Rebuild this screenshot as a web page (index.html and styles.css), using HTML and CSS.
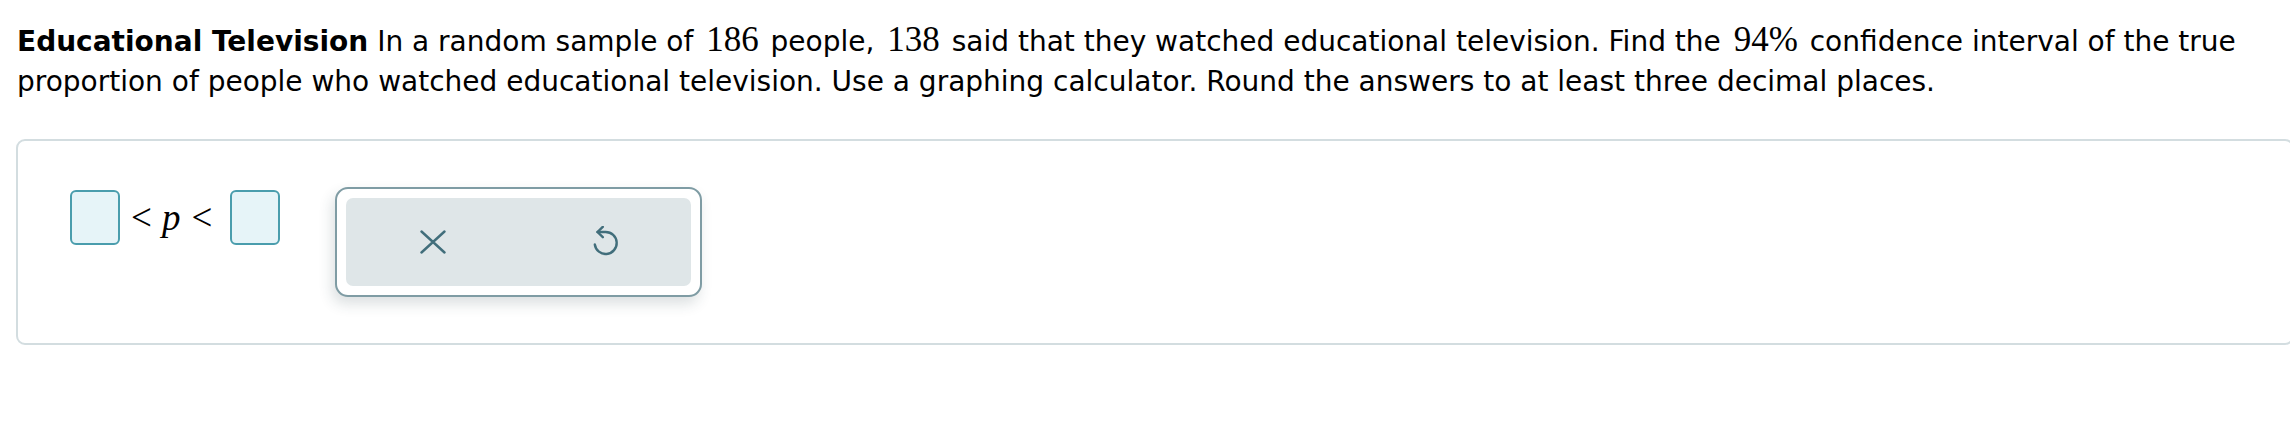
FILE: index.html
```html
<!DOCTYPE html>
<html lang="en">
<head>
<meta charset="utf-8">
<title>Educational Television</title>
<link rel="stylesheet" href="styles.css">
</head>
<body>
<main class="page">
  <p class="question"><strong class="title">Educational Television</strong> In a random sample of <span class="num">186</span> people, <span class="num">138</span> said that they watched educational television. Find the <span class="num">94%</span> confidence interval of the true proportion of people who watched educational television. Use a graphing calculator. Round the answers to at least three decimal places.</p>

  <section class="answer">
    <div class="expr">
      <span class="slot" role="textbox" aria-label="lower bound"></span>
      <span class="rel rel-left">&lt;</span>
      <span class="var">p</span>
      <span class="rel rel-right">&lt;</span>
      <span class="slot" role="textbox" aria-label="upper bound"></span>
    </div>
    <div class="toolbar">
      <div class="toolbar-inner">
        <button class="tool" type="button" aria-label="Clear">
          <svg width="26" height="26" viewBox="0 0 26 26" aria-hidden="true"><path d="M1.5 2.5 L24.5 23.5 M24.5 2.5 L1.5 23.5" fill="none" stroke="currentColor" stroke-width="2.4" stroke-linecap="round"/></svg>
        </button>
        <button class="tool" type="button" aria-label="Undo">
          <svg width="30" height="32" viewBox="0 0 30 32" aria-hidden="true"><path d="M7.5 6 H15.5 A11 11 0 1 1 4.8 18.5" fill="none" stroke="currentColor" stroke-width="2.4" stroke-linecap="round"/><path d="M12.8 0.8 L7.5 6 L12.8 11.2" fill="none" stroke="currentColor" stroke-width="2.4" stroke-linecap="round" stroke-linejoin="round"/></svg>
        </button>
      </div>
    </div>
  </section>
</main>
</body>
</html>
```

FILE: styles.css
```css
html {
  overflow: hidden;
}

body {
  margin: 0;
  background: #ffffff;
  color: #000000;
  font-family: "DejaVu Sans", Verdana, sans-serif;
}

.page {
  padding: 22px 0 0 16px;
}

.question {
  margin: 0;
  font-size: 28px;
  line-height: 40px;
  padding-left: 1px;
  padding-right: 16px;
}

.title {
  font-weight: bold;
}

.num {
  font-family: "Liberation Serif", "Times New Roman", serif;
  font-size: 35px;
  line-height: 20px;
  padding: 0 3px 0 4px;
}

.answer {
  margin-top: 37px;
  margin-right: -4px;
  border: 2px solid #d3dde0;
  border-radius: 9px;
  padding: 46px 0 46px 52px;
  display: flex;
  align-items: flex-start;
}

.expr {
  display: flex;
  align-items: center;
  margin-top: 3px;
  font-family: "Liberation Serif", "Times New Roman", serif;
  font-size: 37px;
  height: 55px;
}

.slot {
  box-sizing: border-box;
  width: 50px;
  height: 55px;
  border: 2.5px solid #4a9dad;
  border-radius: 6px;
  background: #e6f4f8;
}

.rel {
  line-height: 1;
}

.rel-left {
  margin: 0 10px 0 11px;
}

.rel-right {
  margin: 0 18px 0 11px;
}

.var {
  font-style: italic;
  line-height: 1;
}

.toolbar {
  margin-left: 55px;
  box-sizing: border-box;
  width: 367px;
  height: 110px;
  padding: 9px;
  border: 2px solid #7f9ca4;
  border-radius: 13px;
  background: #ffffff;
  box-shadow: -3px 7px 14px rgba(40, 60, 70, 0.16);
}

.toolbar-inner {
  display: flex;
  height: 100%;
  background: #dfe6e8;
  border-radius: 7px;
}

.tool {
  flex: 1;
  display: flex;
  align-items: center;
  justify-content: center;
  border: 0;
  padding: 0;
  margin: 0;
  background: transparent;
  color: #416e7b;
}
```
